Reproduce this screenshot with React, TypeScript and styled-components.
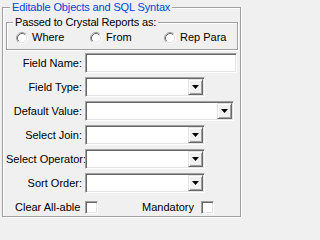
import React from "react";
import styled, { createGlobalStyle } from "styled-components";

const Global = createGlobalStyle`
  html, body { margin: 0; padding: 0; background: #f0f0f0; }
  body {
    font-family: "Liberation Sans", Arial, sans-serif;
    font-size: 11px;
    line-height: 13px;
    color: #000;
  }
`;

const Page = styled.div`
  width: 246px;
  height: 219px;
  box-sizing: border-box;
  padding: 7px 0 0 2px;
`;

const Group = styled.div<{ $w: number; $h: number; $pad: string }>`
  position: relative;
  box-sizing: border-box;
  width: ${(p) => p.$w}px;
  height: ${(p) => p.$h}px;
  padding: ${(p) => p.$pad};
  border: 1px solid #a0a0a0;
  box-shadow: inset 1px 1px 0 #fff, 1px 1px 0 #fff;
`;

const Legend = styled.span<{ $color: string; $left: number }>`
  position: absolute;
  top: -7px;
  left: ${(p) => p.$left}px;
  padding: 0 2px;
  background: #f0f0f0;
  color: ${(p) => p.$color};
  letter-spacing: -0.15px;
  white-space: nowrap;
`;

const RadioRow = styled.div`
  display: grid;
  grid-template-columns: repeat(3, 74px);
  height: 13px;
  align-items: center;
`;

const RadioItem = styled.label`
  display: flex;
  align-items: center;
  gap: 4px;
  white-space: nowrap;
`;

const RadioDot = styled.svg`
  display: block;
  flex: none;
`;

const Form = styled.div`
  display: flex;
  flex-direction: column;
  gap: 4px;
  margin-top: 3px;
`;

const Row = styled.div`
  display: grid;
  grid-template-columns: 76px auto;
  column-gap: 3px;
  align-items: center;
`;

const Label = styled.span`
  text-align: right;
  white-space: nowrap;
`;

const Sunken = styled.div<{ $w: number }>`
  position: relative;
  box-sizing: border-box;
  width: ${(p) => p.$w}px;
  height: 20px;
  background: #fff;
  border: 1px solid;
  border-color: #a0a0a0 #fff #fff #a0a0a0;
  box-shadow: inset 1px 1px 0 #696969, inset -1px -1px 0 #e3e3e3;
  display: flex;
  justify-content: flex-end;
  padding: 1px;
`;

const DropButton = styled.div`
  box-sizing: border-box;
  width: 15px;
  height: 100%;
  background: #f0f0f0;
  border: 1px solid;
  border-color: #e3e3e3 #696969 #696969 #e3e3e3;
  box-shadow: inset 1px 1px 0 #fff, inset -1px -1px 0 #a0a0a0;
  display: flex;
  align-items: center;
  justify-content: center;
`;

const CheckRow = styled.div`
  display: flex;
  align-items: center;
  gap: 44px;
  margin-top: 8px;
  padding-left: 9px;
  height: 13px;
`;

const CheckField = styled.label<{ $w: number }>`
  display: flex;
  align-items: center;
  justify-content: space-between;
  width: ${(p) => p.$w}px;
  white-space: nowrap;
`;

const CheckBox = styled.span`
  display: block;
  box-sizing: border-box;
  width: 13px;
  height: 13px;
  background: #fff;
  border: 1px solid;
  border-color: #a0a0a0 #fff #fff #a0a0a0;
  box-shadow: inset 1px 1px 0 #696969, inset -1px -1px 0 #e3e3e3;
`;

const Radio: React.FC<{ label: string }> = ({ label }) => (
  <RadioItem>
    <RadioDot width="12" height="12" viewBox="0 0 12 12">
      <circle cx="6" cy="6" r="5" fill="#fff" />
      <path d="M2.11 9.89 A5.5 5.5 0 0 1 9.89 2.11" stroke="#a0a0a0" fill="none" />
      <path d="M9.89 2.11 A5.5 5.5 0 0 1 2.11 9.89" stroke="#ffffff" fill="none" />
      <path d="M2.82 9.18 A4.5 4.5 0 0 1 9.18 2.82" stroke="#696969" fill="none" />
      <path d="M9.18 2.82 A4.5 4.5 0 0 1 2.82 9.18" stroke="#e3e3e3" fill="none" />
    </RadioDot>
    {label}
  </RadioItem>
);

const Arrow = () => (
  <svg width="7" height="4" viewBox="0 0 7 4" style={{ display: "block" }}>
    <polygon points="0,0 7,0 3.5,4" fill="#000" />
  </svg>
);

const Combo: React.FC<{ label: string; w: number }> = ({ label, w }) => (
  <Row>
    <Label>{label}</Label>
    <Sunken $w={w}>
      <DropButton>
        <Arrow />
      </DropButton>
    </Sunken>
  </Row>
);

export default function App() {
  return (
    <>
      <Global />
      <Page>
        <Group $w={239} $h={210} $pad="14px 0 0 3px">
          <Legend $color="#0046d5" $left={7}>
            Editable Objects and SQL Syntax
          </Legend>
          <Group $w={232} $h={28} $pad="8px 0 0 9px">
            <Legend $color="#000" $left={6}>
              Passed to Crystal Reports as:
            </Legend>
            <RadioRow>
              <Radio label="Where" />
              <Radio label="From" />
              <Radio label="Rep Para" />
            </RadioRow>
          </Group>
          <Form>
            <Row>
              <Label>Field Name:</Label>
              <Sunken $w={152} />
            </Row>
            <Combo label="Field Type:" w={120} />
            <Combo label="Default Value:" w={149} />
            <Combo label="Select Join:" w={120} />
            <Combo label="Select Operator:" w={120} />
            <Combo label="Sort Order:" w={120} />
          </Form>
          <CheckRow>
            <CheckField $w={83}>
              Clear All-able
              <CheckBox />
            </CheckField>
            <CheckField $w={72}>
              Mandatory
              <CheckBox />
            </CheckField>
          </CheckRow>
        </Group>
      </Page>
    </>
  );
}
